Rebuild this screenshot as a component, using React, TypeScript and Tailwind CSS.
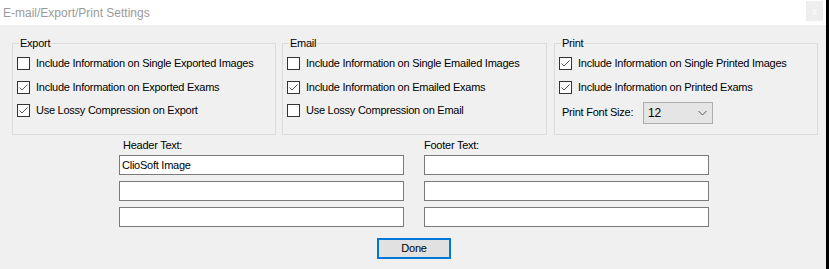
import * as React from "react"

const Check = ({ checked }: { checked: boolean }) => (
  <span className="w-[13px] h-[13px] border border-[#333333] bg-white flex items-center justify-center shrink-0">
    {checked && (
      <svg width="11" height="11" viewBox="0 0 11 11" fill="none">
        <path d="M1.5 5.5L4 8L9.5 2.5" stroke="#5a5a5a" strokeWidth="1" />
      </svg>
    )}
  </span>
)

const Row = ({ label, checked }: { label: string; checked: boolean }) => (
  <div className="flex items-center h-[13px] gap-[6px]">
    <Check checked={checked} />
    <span className="leading-none">{label}</span>
  </div>
)

const Group = ({ title, width, children }: { title: string; width: string; children: React.ReactNode }) => (
  <div className={`relative border border-[#dcdcdc] h-[92px] ${width}`}>
    <span className="absolute -top-[8px] left-[6px] px-[1px] bg-[#f0f0f0] leading-[14px]">{title}</span>
    {children}
  </div>
)

const Field = ({ value }: { value?: string }) => (
  <div className="h-[20px] w-[285px] border border-[#7a7a7a] bg-white flex items-center px-[2px]">
    {value}
  </div>
)

export default function App() {
  return (
    <div
      className="w-[829px] h-[269px] flex text-[11px] text-black"
      style={{ fontFamily: '"Liberation Sans", Arial, sans-serif' }}
    >
      <div className="w-[826px] flex flex-col">
        {/* title bar */}
        <div className="h-[25px] bg-white flex items-center justify-between pl-[3px]">
          <span className="text-[12px] text-[#9a9a9a]">E-mail/Export/Print Settings</span>
          <div className="w-[17px] h-[20px] bg-[#eeeeee] mr-[3px] self-start mt-[1px] flex items-center justify-center text-white text-[10px]">
            x
          </div>
        </div>

        {/* body */}
        <div className="flex-1 bg-[#f0f0f0] pt-[18px] pl-[12px] tracking-[-0.25px]">
          <div className="flex">
            <Group title="Export" width="w-[264px]">
              <div className="flex flex-col gap-[10.5px] pt-[13px] pl-[4px]">
                <Row label="Include Information on Single Exported Images" checked={false} />
                <Row label="Include Information on Exported Exams" checked={true} />
                <Row label="Use Lossy Compression on Export" checked={true} />
              </div>
            </Group>
            <div className="w-[6px]" />
            <Group title="Email" width="w-[265px]">
              <div className="flex flex-col gap-[10.5px] pt-[13px] pl-[4px]">
                <Row label="Include Information on Single Emailed Images" checked={false} />
                <Row label="Include Information on Emailed Exams" checked={true} />
                <Row label="Use Lossy Compression on Email" checked={false} />
              </div>
            </Group>
            <div className="w-[7px]" />
            <Group title="Print" width="w-[264px]">
              <div className="flex flex-col gap-[10.5px] pt-[13px] pl-[4px]">
                <Row label="Include Information on Single Printed Images" checked={true} />
                <Row label="Include Information on Printed Exams" checked={true} />
              </div>
              <div className="flex items-center mt-[8px] pl-[7px]">
                <span className="w-[81px]">Print Font Size:</span>
                <div className="w-[70px] h-[22px] border border-[#adadad] bg-[#e5e5e5] flex items-center justify-between pl-[4px] pr-[5px]">
                  <span className="text-[12px]">12</span>
                  <svg width="9" height="6" viewBox="0 0 9 6" fill="none">
                    <path d="M0.5 1L4.5 5L8.5 1" stroke="#555555" strokeWidth="1" />
                  </svg>
                </div>
              </div>
            </Group>
          </div>

          <div className="flex gap-[20px] pl-[107px] pt-[5px]">
            <div className="flex flex-col">
              <span className="pl-[4px] h-[15px] leading-[11px]">Header Text:</span>
              <div className="flex flex-col gap-[6px]">
                <Field value="ClioSoft Image" />
                <Field />
                <Field />
              </div>
            </div>
            <div className="flex flex-col">
              <span className="h-[15px] leading-[11px]">Footer Text:</span>
              <div className="flex flex-col gap-[6px]">
                <Field />
                <Field />
                <Field />
              </div>
            </div>
          </div>

          <div className="pl-[365px] pt-[11px]">
            <button className="w-[74px] h-[21px] border-2 border-[#0078d7] bg-[#e1e1e1] flex items-center justify-center text-[11px]">
              Done
            </button>
          </div>
        </div>
      </div>
      <div className="w-[3px] bg-black" />
    </div>
  )
}
